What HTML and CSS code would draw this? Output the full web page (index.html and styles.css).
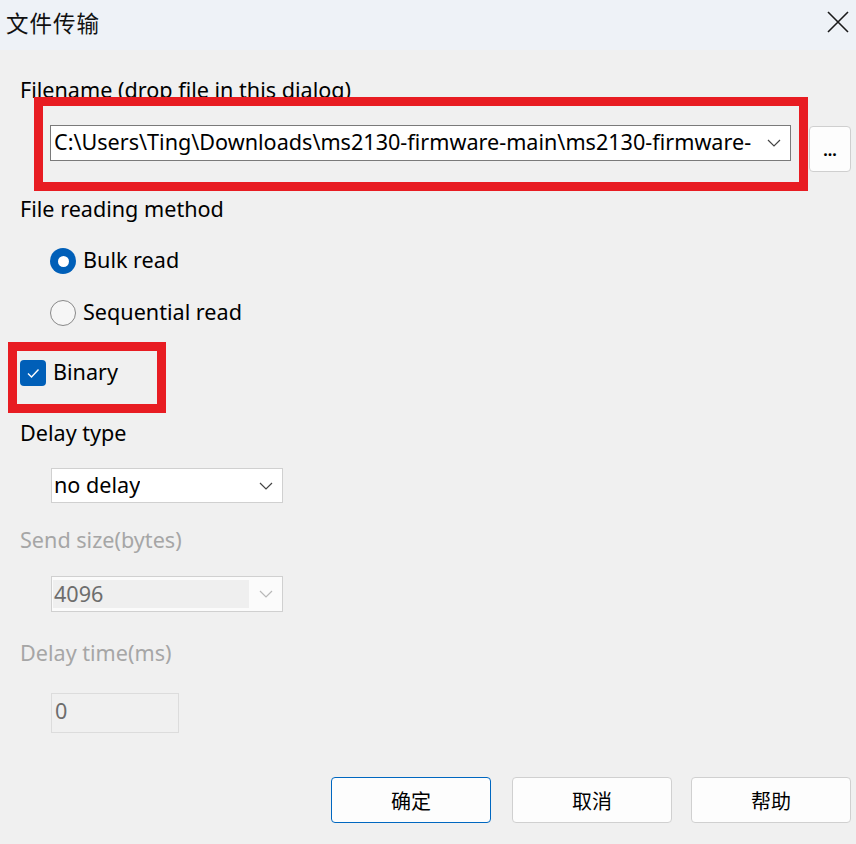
FILE: index.html
```html
<!DOCTYPE html>
<html>
<head>
<meta charset="utf-8">
<link rel="stylesheet" href="styles.css">
</head>
<body>
<div class="dialog">
  <div class="titlebar">
    <span class="title">文件传输</span>
    <svg class="close" width="24" height="24" viewBox="0 0 24 24"><path d="M2 2 L22 22 M22 2 L2 22" stroke="#1a1a1a" stroke-width="1.6" fill="none"/></svg>
  </div>
  <div class="content">
    <div class="label">Filename (drop file in this dialog)</div>
    <div class="file-row">
      <div class="combo combo-file">
        <span class="combo-text">C:\Users\Ting\Downloads\ms2130-firmware-main\ms2130-firmware-</span>
        <svg class="chev" width="14" height="8" viewBox="0 0 14 8"><path d="M1 1 L7 7 L13 1" stroke="#444" stroke-width="1.2" fill="none"/></svg>
      </div>
      <button class="btn-browse">...</button>
    </div>
    <div class="label label-method">File reading method</div>
    <div class="radio-row radio-first"><span class="radio checked"></span><span class="opt">Bulk read</span></div>
    <div class="radio-row radio-second"><span class="radio"></span><span class="opt">Sequential read</span></div>
    <div class="check-row"><span class="checkbox"><svg width="26" height="26" viewBox="0 0 26 26"><path d="M8 13.5 L11.5 17 L18.5 9.5" stroke="#fff" stroke-width="1.4" fill="none"/></svg></span><span class="opt">Binary</span></div>
    <div class="label label-delay">Delay type</div>
    <div class="combo combo-small combo-delay">
      <span class="combo-text">no delay</span>
      <svg class="chev" width="14" height="8" viewBox="0 0 14 8"><path d="M1 1 L7 7 L13 1" stroke="#444" stroke-width="1.2" fill="none"/></svg>
    </div>
    <div class="label disabled label-send">Send size(bytes)</div>
    <div class="combo combo-small combo-disabled">
      <span class="combo-edit">4096</span>
      <svg class="chev" width="14" height="8" viewBox="0 0 14 8"><path d="M1 1 L7 7 L13 1" stroke="#b8b8b8" stroke-width="1.2" fill="none"/></svg>
    </div>
    <div class="label disabled label-time">Delay time(ms)</div>
    <div class="edit-disabled">0</div>
    <div class="buttons">
      <button class="btn btn-default">确定</button>
      <button class="btn">取消</button>
      <button class="btn">帮助</button>
    </div>
    <div class="mark mark-file"></div>
    <div class="mark mark-binary"></div>
  </div>
</div>
</body>
</html>
```
FILE: styles.css
```css
* { box-sizing: border-box; }
html, body {
  margin: 0;
  padding: 0;
  width: 856px;
  height: 844px;
  overflow: hidden;
  background: #f0f0f0;
  font-family: "Noto Sans", "Noto Sans CJK SC", sans-serif;
  color: #000;
}
.dialog {
  width: 856px;
  height: 844px;
  display: flex;
  flex-direction: column;
}
.titlebar {
  height: 50px;
  background: #eef2f7;
  display: flex;
  align-items: center;
  justify-content: space-between;
  padding: 0 6px 6px 6px;
}
.title {
  font-family: "Noto Sans CJK SC", sans-serif;
  font-size: 22.5px;
  letter-spacing: 1px;
  color: #111;
}
.close { margin-right: 0; }
.content {
  position: relative;
  flex: 1;
  display: flex;
  flex-direction: column;
  align-items: flex-start;
  padding-left: 20px;
}
.label {
  font-size: 21.6px;
  line-height: 24px;
  height: 26px;
  white-space: nowrap;
}
.content > .label:first-child { margin-top: 28px; }
.disabled { color: #a6a6a6; }
.file-row {
  margin-top: 21px;
  margin-left: 30px;
  display: flex;
  align-items: flex-start;
  gap: 18px;
}
.combo {
  background: #fff;
  display: flex;
  align-items: center;
  justify-content: space-between;
  position: relative;
}
.combo-file {
  width: 741px;
  height: 36px;
  border: 1px solid #7a7a7a;
  padding: 0 9px 0 3px;
}
.combo-text {
  font-size: 21.6px;
  line-height: 30px;
  padding-bottom: 2px;
  white-space: nowrap;
  overflow: hidden;
}
.btn-browse {
  margin-top: 1px;
  width: 42px;
  height: 46px;
  border: 1px solid #cfcfcf;
  border-radius: 4px;
  background: #fdfdfd;
  font-family: "Noto Sans", sans-serif;
  font-size: 16px;
  font-weight: bold;
  padding: 0;
  color: #000;
  line-height: 46px;
}
.label-method { margin-top: 25px; }
.radio-row {
  margin-left: 30px;
  display: flex;
  align-items: center;
  gap: 7px;
  height: 26px;
}
.radio-first { margin-top: 25px; }
.radio-second { margin-top: 26px; }
.opt { font-size: 21.6px; line-height: 24px; padding-bottom: 2px; white-space: nowrap; }
.radio {
  width: 26px;
  height: 26px;
  border-radius: 50%;
  border: 1.5px solid #888;
  background: #f6f6f6;
  display: block;
}
.radio.checked {
  border: none;
  background: #005fb8;
  position: relative;
}
.radio.checked::after {
  content: "";
  position: absolute;
  left: 7.5px;
  top: 7.5px;
  width: 11px;
  height: 11px;
  border-radius: 50%;
  background: #fff;
}
.check-row {
  margin-top: 34px;
  display: flex;
  align-items: center;
  gap: 7px;
  height: 26px;
}
.checkbox {
  width: 26px;
  height: 26px;
  border-radius: 4px;
  background: #005fb8;
  display: block;
}
.checkbox svg { display: block; }
.label-delay { margin-top: 35px; }
.combo-small {
  margin-left: 31px;
  width: 232px;
  padding: 0 9px 0 2px;
  border: 1px solid #d0d0d0;
}
.combo-delay { margin-top: 21px; height: 35px; }
.label-send { margin-top: 25px; }
.combo-disabled {
  margin-top: 22px;
  height: 36px;
  background: #fbfbfb;
  padding: 3px 9px 3px 1px;
  align-items: stretch;
}
.combo-disabled .chev { align-self: center; }
.combo-edit {
  width: 196px;
  background: #efefef;
  color: #6d6d6d;
  font-size: 21.6px;
  line-height: 27px;
  padding-left: 1px;
}
.label-time { margin-top: 29px; }
.edit-disabled {
  margin-top: 26px;
  margin-left: 31px;
  width: 128px;
  height: 40px;
  border: 1px solid #dcdcdc;
  background: #f0f0f0;
  color: #6d6d6d;
  font-size: 21.6px;
  line-height: 33px;
  padding-left: 3px;
}
.buttons {
  margin-top: 44px;
  align-self: flex-end;
  margin-right: 5px;
  display: flex;
  gap: 21px;
}
.btn {
  width: 160px;
  height: 46px;
  border: 1px solid #d0d0d0;
  border-radius: 4px;
  background: #fdfdfd;
  font-family: "Noto Sans CJK SC", sans-serif;
  font-size: 20px;
  color: #000;
  padding: 0;
}
.btn-default { border-color: #0067c0; }
.buttons .btn:nth-child(2) { margin-right: -2px; }
.mark {
  position: absolute;
  border: 9px solid #e81c22;
}
.mark-file {
  left: 34px;
  top: 47px;
  width: 774px;
  height: 94px;
}
.mark-binary {
  left: 8px;
  top: 292px;
  width: 158px;
  height: 71px;
}
```
